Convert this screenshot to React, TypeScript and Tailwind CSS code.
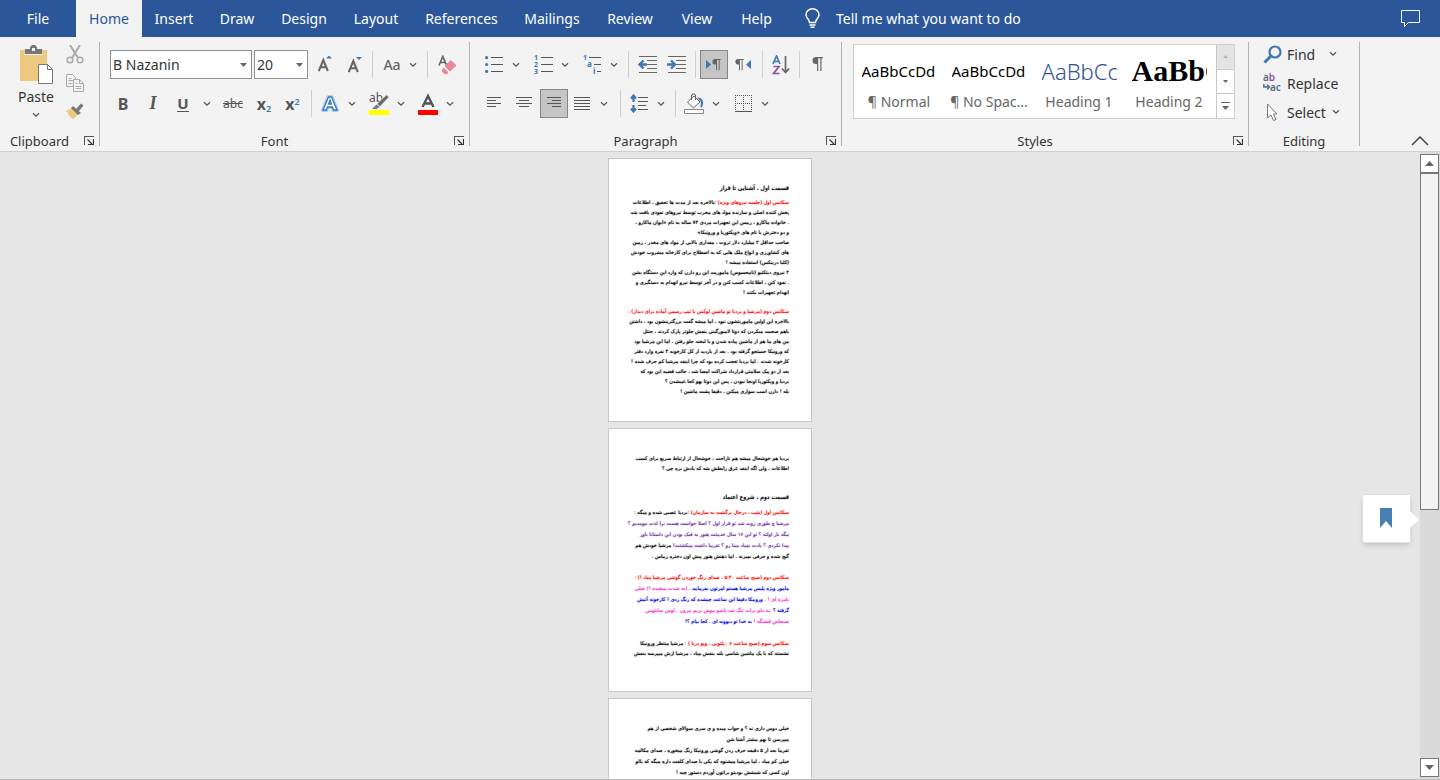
import type { ReactNode } from "react";

const tabs = [
  { name: "File", width: "w-[76px]" },
  { name: "Home", width: "w-[66px]" },
  { name: "Insert", width: "w-16" },
  { name: "Draw", width: "w-[62px]" },
  { name: "Design", width: "w-[72px]" },
  { name: "Layout", width: "w-[72px]" },
  { name: "References", width: "w-[99px]" },
  { name: "Mailings", width: "w-[82px]" },
  { name: "Review", width: "w-[74px]" },
  { name: "View", width: "w-[60px]" },
  { name: "Help", width: "w-[59px]" },
];

type Tone = "black" | "red" | "purple" | "blue" | "pink";
type Run = [Tone, string];
type Line = Run[];

const toneClass: Record<Tone, string> = {
  black: "text-black",
  red: "text-[#ff0000]",
  purple: "text-[#7030a0]",
  blue: "text-[#0000e6]",
  pink: "text-[#f032c8]",
};

const k = (text: string): Line => [["black", text]];

const sceneOne: Line[] = [
  [["red", "سکانس اول (جلسه نیروهای ویژه) "], ["black", ":بالاخره بعد از مدت ها تحقیق ، اطلاعات"]],
  k("پخش کننده اصلی و سازنده مواد های مخرب توسط نیروهای نفوذی یافت شد"),
  k(". خانواده ماکارو ، رییس این تجهیزات مردی ۷۴ ساله به نام «ایوان ماکارو ،"),
  k("و دو دخترش با نام های «ویکتوریا و ورونیکا»"),
  k("صاحب حداقل ۲ میلیارد دلار ثروت ، مقداری بالایی از مواد های مخدر ، زمین"),
  k("های کشاورزی و انواع ملک هایی که به اصطلاح برای کارخانه مشروب خودش"),
  k("(کلبا درینکس) استفاده میشه !"),
  k("۲ نیروی دیتکتیو (نامحسوس) ماموریت این رو دارن که وارد این دستگاه بشن"),
  k(". نفوذ کنن ، اطلاعات کسب کنن و در آخر توسط نیرو انهدام به دستگیری و"),
  k("انهدام تجهیزات بکنند !"),
];

const sceneTwo: Line[] = [
  [["red", "سکانس دوم (مرشیا و بردیا تو ماشین لوکس با تیپ رسمی آماده برای دیدار) :"]],
  k("بالاخره این اولین ماموریتشون نبود ، اما میشه گفت بزرگترینشون بود ، داشتن"),
  k("باهم صحبت میکردن که دوتا لامبورگینی بنفش جلوتر پارک کردند ، جنتل"),
  k("من های ما هم از ماشین پیاده شدن و با لبخند جلو رفتن ، اما این مرشیا بود"),
  k("که ورونیکا جستجو گرفته بود . بعد از بازدید از کل کارخونه ۴ نفره وارد دفتر"),
  k("کارخونه شدند . اما بردیا تعجب کرده بود که چرا اینقد مرشیا کم حرف شده !"),
  k("بعد از دو پیک سلامتی قرارداد شراکت امضا شد ، جالب قضیه این بود که"),
  k("بردیا و ویکتوریا اونجا نبودن ، پس این دوتا یهو کجا غیبشدن ؟"),
  k("بله ! دارن اسب سواری میکنن ، دقیقا پشت ماشین !"),
];

const partOneEnd: Line[] = [
  k("بردیا هم خوشحال میشه هم ناراحت ، خوشحال از ارتباط سریع برای کسب"),
  k("اطلاعات ، ولی اگه اینقد غرق رابطش شه که یادش بره چی ؟"),
];

const nightScene: Line[] = [
  [["red", "سکانس اول (شب ، درحال برگشت به سازمان) "], ["black", ":بردیا عصبی شده و میگه :"]],
  [["purple", "مرشیا چ طوری روت شد تو قرار اول ؟ اصلا حواست هست برا لذت نیومدیم ؟"]],
  [["purple", "مگه بار اولته ؟ تو این ۱۶ سال خدمتت هنوز به فیک بودن این داستانا باور"]],
  [["purple", "پیدا نکردی ؟ یادت نمیاد مینا رو ؟ تقریبا داشت میکشتت! "], ["black", "مرشیا خودش هم"]],
  k("گیج شده و حرفی نمیزنه . اما ذهنش هنوز پیش اون دختره زیباس ."),
];

const callScene: Line[] = [
  [["red", "سکانس دوم (صبح ساعت ۵:۴۰ ، صدای زنگ خوردن گوشی مرشیا میاد !) :"]],
  [["blue", "مامور ویژه پلیس مرشیا هستم امرتون بفرمایید . "], ["pink", "(به شدت میخنده !) خیلی"]],
  [["pink", "بامزه ای ! . "], ["blue", "ورونیکا دقیقا این ساعت چیشده که زنگ زدی ! کارخونه آتیش"]],
  [["blue", "گرفته ؟ "], ["pink", ".نه دلم برات تنگ شد پاشو بپوش بریم بیرون . لوس سانتوس"]],
  [["pink", "صبحاش قشنگه ! "], ["blue", "به خدا تو دیوونه ای . کجا بیام ؟!"]],
];

const morningScene: Line[] = [
  [["red", "سکانس سوم (صبح ساعت ۶ . پلتوبی . ویو دریا ) : "], ["black", "مرشیا منتظر ورونیکا"]],
  k("نشسته که با یک ماشین شاسی بلند بنفش میاد ، مرشیا ازش میپرسه بنفش"),
];

const lastScene: Line[] = [
  k("خیلی دوس داری نه ؟ و جواب میده و ی سری سوالای شخصی از هم"),
  k("میپرسن تا بهم بیشتر آشنا شن"),
  k("تقریبا بعد از ۵ دقیقه حرف زدن گوشی ورونیکا زنگ میخوره ، صدای مکالمه"),
  k("خیلی کم میاد ، اما مرشیا میشنوه که یکی با صدای کلفت داره میگه که یالو"),
  k("اون کسی که شیشش بودیتو براتون آوردم دستور چیه !"),
];

function Paragraph({ lines, leading = "leading-[11px]" }: { lines: Line[]; leading?: string }) {
  return (
    <p className={`text-[5px] ${leading}`}>
      {lines.map((line, i) => (
        <span key={i} className="block whitespace-nowrap">
          {line.map(([tone, text], j) => (
            <span key={j} className={`${toneClass[tone]} [text-shadow:0_0_1px_currentColor]`}>{text}</span>
          ))}
        </span>
      ))}
    </p>
  );
}

function Page({ children }: { children: ReactNode }) {
  return (
    <article
      dir="rtl"
      lang="fa"
      className="h-[264px] w-[204px] shrink-0 overflow-hidden border border-[#c6c6c6] bg-white px-[22px] pt-6 font-['DejaVu_Sans',sans-serif]"
    >
      {children}
    </article>
  );
}

function Chevron() {
  return (
    <svg width="8" height="6" viewBox="0 0 8 6" fill="none" stroke="#555" strokeWidth="1.3">
      <path d="M1 1.2 4 4.2 7 1.2" />
    </svg>
  );
}

function Tool({ label, width = "w-7", active = false, children }: { label: string; width?: string; active?: boolean; children: ReactNode }) {
  return (
    <button
      aria-label={label}
      className={`flex h-[29px] shrink-0 items-center justify-center ${width} ${active ? "border border-[#858585] bg-[#c5c5c5]" : ""}`}
    >
      {children}
    </button>
  );
}

function Split({ label, children }: { label: string; children: ReactNode }) {
  return (
    <div className="flex shrink-0">
      <Tool label={label}>{children}</Tool>
      <Tool label={`${label} options`} width="w-[15px]"><Chevron /></Tool>
    </div>
  );
}

function Sep() {
  return (
    <div className="flex w-[9px] shrink-0 justify-center">
      <div className="h-[27px] w-px bg-[#d0d0d0]" />
    </div>
  );
}

function Group({ title, width, launcher = true, children }: { title: string; width: string; launcher?: boolean; children: ReactNode }) {
  return (
    <section aria-label={title} className={`flex shrink-0 py-[5px] ${width}`}>
      <div className="flex min-w-0 flex-1 flex-col justify-between">
        {children}
        <div className="flex h-[10px] items-center text-[13px] leading-[10px] text-[#333]">
          <span className="flex-1 text-center">{title}</span>
          {launcher && (
            <button aria-label={`${title} settings`} className="flex w-5 items-center justify-center">
              <svg width="10" height="10" viewBox="0 0 10 10" fill="none" stroke="#555" shapeRendering="crispEdges">
                <path d="M.5 9V.5H10" />
                <path d="M3.500 3.500 8 8M9.500 3v5.500H4" shapeRendering="auto" stroke="#333" strokeWidth="1.2" />
              </svg>
            </button>
          )}
        </div>
      </div>
      <div className="w-px bg-[#b1b1b1]" />
    </section>
  );
}

function Combo({ label, value, width }: { label: string; value: string; width: string }) {
  return (
    <div className={`relative h-[29px] shrink-0 ${width}`}>
      <select aria-label={label} className="h-full w-full appearance-none border border-[#919191] bg-white pl-[2px] text-[14px] text-[#333]">
        <option>{value}</option>
      </select>
      <svg className="pointer-events-none absolute top-[13px] right-[5px]" width="7" height="4" viewBox="0 0 7 4" fill="#666"><path d="M0 0h7L3.500 4z" /></svg>
    </div>
  );
}

/* Alignment icon, each entry is a [start, end] pair. */
function LinesIcon({ rows, width }: { rows: [number, number][]; width: number }) {
  return (
    <svg width={width} height="14" viewBox={`0 0 ${width} 14`} stroke="#555" shapeRendering="crispEdges">
      {rows.map(([a, b], i) => <path key={i} d={`M${a} ${i * 3 + 0.5}H${b}`} />)}
    </svg>
  );
}

function IndentIcon({ inward }: { inward: boolean }) {
  return (
    <svg width="19" height="17" viewBox="0 0 19 17" fill="none">
      <path d="M1 .5h18M9 4.500h10M9 8.500h10M9 12.500h10M1 16.500h18" stroke="#666" shapeRendering="crispEdges" />
      <path d={inward ? "M0 8.500h7M4 4.500l4 4-4 4" : "M9 8.500H2M5.500 4.500l-4 4 4 4"} stroke="#3f76b4" strokeWidth="2.400" />
    </svg>
  );
}

function ClipboardTools() {
  return (
    <div className="flex pt-[3px]">
      <button className="flex w-[62px] flex-col items-center pl-[10px] text-[14px] leading-[18px] text-[#333]">
        <svg width="36" height="39" viewBox="0 0 36 39">
          <path d="M2 5h27v31H2z" fill="#edc87e" />
          <path d="M7 9V4h5V2l2-2h3l2 2v2h5v5z" fill="#777" />
          <path d="M14 3h3v3h-3z" fill="#f3f3f3" />
          <path d="M6 9.500h19" stroke="#f3f3f3" />
          <path d="M20.500 19.500h9l5 5v14h-14z" fill="#fff" stroke="#777" />
          <path d="M29.500 19.500v5h5" fill="none" stroke="#777" />
        </svg>
        <span className="mt-1">Paste</span>
        <span className="mt-[6px]"><Chevron /></span>
      </button>
      <div className="flex flex-col items-center gap-[9px] pl-[4px]">
        <button aria-label="Cut">
          <svg width="18" height="20" viewBox="0 0 18 20" fill="none" stroke="#aaa">
            <path d="M4 0 12 13M14 0 6 13" strokeWidth="2" />
            <circle cx="4" cy="15" r="2.800" strokeWidth="1.600" />
            <circle cx="14" cy="15" r="2.800" strokeWidth="1.600" />
          </svg>
        </button>
        <button aria-label="Copy">
          <svg width="18" height="19" viewBox="0 0 18 19" fill="#f3f3f3" stroke="#aaa">
            <path d="M.5.5h6l3 3v9h-9z" />
            <path d="M2.500 4.500h3M2.500 6.500h5M2.500 9.500h4" />
            <path d="M7.500 5.500h6l4 4v8h-10z" />
            <path d="M13.500 5.500v4h4M9.500 9.500h2M9.500 12.500h6M9.500 14.500h6" fill="none" />
          </svg>
        </button>
        <button aria-label="Format Painter">
          <svg width="18" height="17" viewBox="0 0 18 17">
            <path d="m0 9 6-3 6 6-4 5-3-1-1-2-1 0-1-3z" fill="#edc87e" />
            <path d="m7 4 8 7-3 2-7-7z" fill="#777" />
            <path d="m10 7 5-5.500 2.500 2-5 6z" fill="#777" />
          </svg>
        </button>
      </div>
    </div>
  );
}

function FontTools() {
  return (
    <div className="flex flex-col gap-[10px] pt-2">
      <div className="flex items-center pl-[10px]">
        <div className="flex gap-[2px]">
          <Combo label="Font" value="B Nazanin" width="w-[142px]" />
          <Combo label="Font size" value="20" width="w-[54px]" />
        </div>
        <Tool label="Grow font" width="w-[34px]">
          <svg width="14" height="18" viewBox="0 0 14 18" fill="none">
            <path d="M.8 15 5.300 4 9.800 15M2.500 11.300h5.600" stroke="#666" strokeWidth="2" />
            <path d="m8 2.500 3-3 3 3z" fill="#3f76b4" />
          </svg>
        </Tool>
        <Tool label="Shrink font" width="w-[26px]">
          <svg width="14" height="18" viewBox="0 0 14 18" fill="none">
            <path d="M.8 16 5.300 5 9.800 16M2.500 12.300h5.600" stroke="#666" strokeWidth="2" />
            <path d="m8 1 3 3 3-3z" fill="#3f76b4" />
          </svg>
        </Tool>
        <Sep />
        <button aria-label="Change case" className="flex h-[29px] w-[46px] shrink-0 items-center justify-center gap-2 text-[14px] font-medium text-[#666]">
          Aa <Chevron />
        </button>
        <Sep />
        <Tool label="Clear formatting" width="w-[30px]">
          <svg width="19" height="20" viewBox="0 0 19 20" fill="none">
            <path d="M1 10.500 4.800 1.500 8.500 10M2.500 7.500h4.500" stroke="#666" strokeWidth="1.700" />
            <path d="m13 5.500 5 5-6 5.500-5-5z" fill="#e8889a" stroke="#e8889a" strokeLinejoin="round" />
            <path d="m5.500 12.500 5 5-1.500 1.500-2 .5-3.500-3.500z" fill="#e8889a" />
          </svg>
        </Tool>
      </div>
      <div className="flex items-center pl-2">
        <Tool label="Bold" width="w-[30px]"><span className="text-[16px] font-bold text-[#555]">B</span></Tool>
        <Tool label="Italic" width="w-[30px]"><span className="font-['Liberation_Serif',serif] text-[18px] font-bold text-[#555] italic">I</span></Tool>
        <Tool label="Underline" width="w-[30px]"><span className="border-b border-[#555] text-[15px] leading-[15px] font-bold text-[#555]">U</span></Tool>
        <Tool label="Underline options" width="w-[18px]"><Chevron /></Tool>
        <Tool label="Strikethrough" width="w-[34px]"><span className="text-[12px] text-[#555] line-through">abc</span></Tool>
        <Tool label="Subscript"><span className="text-[16px] leading-4 font-bold text-[#555]">x<sub className="text-[9px] font-semibold text-[#3f76b4]">2</sub></span></Tool>
        <Tool label="Superscript" width="w-[29px]"><span className="text-[16px] leading-4 font-bold text-[#555]">x<sup className="text-[9px] font-semibold text-[#3f76b4]">2</sup></span></Tool>
        <Sep />
        <div className="flex gap-[6px]">
          <Split label="Text effects">
            <svg width="20" height="20" viewBox="0 0 20 20" fill="none">
              <path d="M3 16 8.500 3h3L17 16h-3.500l-1-3h-5l-1 3zM8.500 10h3L10 6z" stroke="#a9cdf3" strokeWidth="4" strokeLinejoin="round" />
              <path d="M3 16 8.500 3h3L17 16h-3.500l-1-3h-5l-1 3zM8.500 10h3L10 6z" stroke="#3a78c0" strokeWidth="1.300" fill="#fff" fillRule="evenodd" />
            </svg>
          </Split>
          <Split label="Highlight">
            <svg width="20" height="28" viewBox="0 0 20 28">
              <text x="0" y="12" fontSize="12" fill="#555" className="font-['Noto_Sans',sans-serif]">ab</text>
              <path d="m17.500 5 2.500 2-9 9.500-3-2.500z" fill="#666" stroke="#f3f3f3" strokeWidth=".5" />
              <path d="m7.500 14.500 3 2.500-3 2H3z" fill="#777" />
              <path d="M0 20h20v5H0z" fill="#ff0" />
            </svg>
          </Split>
          <Split label="Font color">
            <svg width="20" height="22" viewBox="0 0 20 22" fill="none">
              <path d="M4.500 14 10 3l5.500 11M6.500 10.500h7" stroke="#555" strokeWidth="2.400" />
              <path d="M0 17h20v5H0z" fill="#f00" />
            </svg>
          </Split>
        </div>
      </div>
    </div>
  );
}

function Pilcrow({ x, y, scale = 1 }: { x: number; y: number; scale?: number }) {
  return (
    <g transform={`translate(${x} ${y}) scale(${scale})`} fill="#666">
      <path d="M4 0h7v1.200H9.500V14H8.300V1.200H6.200V14H5V7H4A3.500 3.500 0 0 1 4 0z" />
    </g>
  );
}

function ParagraphTools() {
  return (
    <div className="flex flex-col gap-[10px] pt-2 pl-[10px]">
      <div className="flex items-center">
        <div className="flex gap-[6px] pr-[3px]">
          <Split label="Bullets">
            <svg width="18" height="17" viewBox="0 0 18 17">
              <path d="M6 1.500h12M6 8.500h12M6 15.500h12" stroke="#555" shapeRendering="crispEdges" />
              <g fill="#3f76b4"><circle cx="1.600" cy="1.600" r="1.600" /><circle cx="1.600" cy="8.500" r="1.600" /><circle cx="1.600" cy="15.400" r="1.600" /></g>
            </svg>
          </Split>
          <Split label="Numbering">
            <svg width="19" height="26" viewBox="0 0 19 26" fontSize="7" fontWeight="700" fill="#3f76b4" className="font-['Noto_Sans',sans-serif]">
              <path d="M7 5.500h12M7 12.500h12M7 19.500h12" stroke="#555" shapeRendering="crispEdges" />
              <text x="0" y="8">1</text><text x="0" y="15">2</text><text x="0" y="22">3</text>
            </svg>
          </Split>
          <Split label="Multilevel list">
            <svg width="20" height="26" viewBox="0 0 20 26" fontSize="8" fontWeight="700" fill="#3f76b4" className="font-['Noto_Sans',sans-serif]">
              <path d="M7 5.500h12M12 12.500h7M15 19.500h4" stroke="#555" shapeRendering="crispEdges" />
              <text x="1" y="8" fontSize="7">1</text><text x="5" y="15">a</text><text x="11" y="22">i</text>
            </svg>
          </Split>
        </div>
        <Sep />
        <Tool label="Decrease indent"><IndentIcon inward={false} /></Tool>
        <Tool label="Increase indent" width="w-[30px]"><IndentIcon inward /></Tool>
        <Sep />
        <Tool label="Left-to-right" active>
          <svg width="16" height="12" viewBox="0 0 16 12"><path d="m0 1 5 4.500L0 10z" fill="#3f76b4" /><Pilcrow x={6} y={0} scale={0.8} /></svg>
        </Tool>
        <Tool label="Right-to-left" width="w-[30px]">
          <svg width="16" height="12" viewBox="0 0 16 12"><path d="m16 1-5 4.500 5 4.500z" fill="#3f76b4" /><Pilcrow x={0} y={0} scale={0.8} /></svg>
        </Tool>
        <Sep />
        <Tool label="Sort">
          <svg width="18" height="20" viewBox="0 0 18 20" fill="none" strokeWidth="1.700">
            <path d="M1 9 4.500 1 8 9M2.300 6.500h4.500" stroke="#3f76b4" />
            <path d="M1.500 11.500H7L1.500 18.500h6" stroke="#8a52a8" />
            <path d="M13.500 1v16M10 13.500l3.500 4 3.500-4" stroke="#666" />
          </svg>
        </Tool>
        <Sep />
        <Tool label="Show marks"><svg width="12" height="15" viewBox="0 0 12 15"><Pilcrow x={0} y={0} /></svg></Tool>
      </div>
      <div className="flex items-center">
        <Tool label="Align left"><LinesIcon width={14} rows={[[0, 14], [0, 9], [0, 14], [0, 9]]} /></Tool>
        <Tool label="Align center" width="w-8"><LinesIcon width={16} rows={[[0, 16], [3, 13], [0, 16], [3, 13]]} /></Tool>
        <Tool label="Align right" active><LinesIcon width={14} rows={[[0, 14], [5, 14], [0, 14], [5, 14]]} /></Tool>
        <div className="pr-[5px]">
          <Split label="Justify"><LinesIcon width={16} rows={[[0, 16], [0, 16], [0, 16], [0, 16], [0, 16]]} /></Split>
        </div>
        <Sep />
        <div className="pr-[3px]">
          <Split label="Line spacing">
            <svg width="18" height="19" viewBox="0 0 18 19" fill="none">
              <path d="M8 3.500h10M8 7.500h10M8 11.500h8M8 15.500h10" stroke="#555" shapeRendering="crispEdges" />
              <path d="M3.500 2v6M3.500 11v6M1 4.500l2.500-3 2.500 3M1 14.500l2.500 3 2.500-3" stroke="#3f76b4" strokeWidth="2.200" />
            </svg>
          </Split>
        </div>
        <Sep />
        <div className="flex gap-[6px]">
          <Split label="Shading">
            <svg width="20" height="21" viewBox="0 0 20 21" fill="none">
              <path d="m10 3 6 6-6.500 6L3.500 9z" fill="#fff" stroke="#666" />
              <path d="M7.500 7V2.500Q9.500-1 11.500 2.500V7" stroke="#666" strokeWidth="1.200" />
              <path d="M13 4.500q5 0 6 4 .5 4-2 6.500-1-2 0-6z" fill="#3f76b4" />
              <path d="M.5 16.500h19v4H.5z" fill="#fff" stroke="#888" />
            </svg>
          </Split>
          <Split label="Borders">
            <svg width="17" height="18" viewBox="0 0 17 18" fill="none" stroke="#555" shapeRendering="crispEdges">
              <path d="M0 .5h17M0 8.500h17M.5 0v16M8.500 0v16M16.500 0v16" strokeDasharray="1 1" />
              <path d="M0 16.500h17" />
            </svg>
          </Split>
        </div>
      </div>
    </div>
  );
}

const styleCards = [
  { name: "¶ Normal", preview: "AaBbCcDd", look: "text-[15px] text-black" },
  { name: "¶ No Spac...", preview: "AaBbCcDd", look: "text-[15px] text-black" },
  { name: "Heading 1", preview: "AaBbCc", look: "text-[22px] font-light text-[#2f5496]" },
  { name: "Heading 2", preview: "AaBbC", look: "font-['Liberation_Serif',serif] text-[30px] font-bold text-black" },
];

function StylesTools() {
  return (
    <div className="pt-[2px] pr-[13px] pl-[11px]">
      <div className="flex h-[75px] border border-[#cfcfcf] bg-white">
        {styleCards.map((card) => (
          <button key={card.name} className="flex w-[90px] shrink-0 flex-col items-center pt-2">
            <span className={`block h-9 w-[75px] overflow-hidden text-left leading-9 whitespace-nowrap ${card.look}`}>
              {card.preview}
            </span>
            <span className="text-[14px] leading-[26px] whitespace-nowrap text-[#666]">{card.name}</span>
          </button>
        ))}
        <div className="ml-auto flex w-[18px] flex-col divide-y divide-[#c6c6c6] border-l border-[#c6c6c6]">
          <button aria-label="Previous styles" className="flex flex-1 items-center justify-center bg-[#e4e4e4]">
            <svg width="5" height="3" viewBox="0 0 5 3" fill="#b5b5b5"><path d="m0 3 2.500-3L5 3z" /></svg>
          </button>
          <button aria-label="Next styles" className="flex flex-1 items-center justify-center">
            <svg width="5" height="3" viewBox="0 0 5 3" fill="#666"><path d="m0 0 2.500 3L5 0z" /></svg>
          </button>
          <button aria-label="More styles" className="flex flex-1 items-center justify-center">
            <svg width="9" height="8" viewBox="0 0 9 8" fill="#666"><path d="M0 0h9v1H0zM1 4h7L4.500 8z" /></svg>
          </button>
        </div>
      </div>
    </div>
  );
}

function EditingTools() {
  return (
    <div className="flex flex-col gap-[5px] pl-[14px] text-[14px] text-[#333]">
      <button className="flex h-6 items-center gap-[5px]">
        <svg width="19" height="19" viewBox="0 0 19 19" fill="none" stroke="#3f76b4">
          <circle cx="12" cy="7" r="5.500" strokeWidth="2.200" /><path d="m8 11-6.500 6.500" strokeWidth="3" />
        </svg>
        <span className="w-[37px] text-left">Find</span><Chevron />
      </button>
      <button className="flex h-6 items-center gap-[5px]">
        <svg width="19" height="24" viewBox="0 0 19 24" fontSize="10" fontWeight="600" fill="#666">
          <text x="0" y="10" className="font-['Noto_Sans',sans-serif]">a<tspan fill="#8a52a8">b</tspan></text>
          <text x="7" y="20" className="font-['Noto_Sans',sans-serif]">a<tspan fill="#3f76b4">c</tspan></text>
          <path d="M.8 13v3h5M4 13.500l2.500 2.500L4 18.500" fill="none" stroke="#3f76b4" strokeWidth="1.500" />
        </svg>
        Replace
      </button>
      <button className="flex h-6 items-center gap-[5px]">
        <svg width="19" height="19" viewBox="0 0 19 19" fill="#fff" stroke="#777">
          <path d="M4.500 1v14l3.500-3 2.500 5.500 2.500-1-2.500-5.500H14z" />
        </svg>
        <span className="w-10 text-left">Select</span><Chevron />
      </button>
    </div>
  );
}

export default function App() {
  return (
    <div className="flex h-screen flex-col overflow-hidden bg-[#f3f3f3] font-['Noto_Sans','Open_Sans',sans-serif]">
      <header className="flex h-[37px] shrink-0 items-center bg-[#2b579a] pr-5 text-[14px] text-white">
        <nav className="flex h-full">
          {tabs.map((tab) => (
            <button
              key={tab.name}
              className={`h-full shrink-0 text-center ${tab.width} ${tab.name === "Home" ? "bg-[#f3f3f3] text-[#2b579a]" : ""}`}
            >
              {tab.name}
            </button>
          ))}
        </nav>
        <button className="flex h-full items-center gap-4 pb-px pl-[19px]">
          <svg width="15" height="20" viewBox="0 0 15 20" fill="none" stroke="#fff" strokeWidth="1.500">
            <path d="M4.500 14.500C4.500 11 1 10.500 1 6.800A6.500 6 0 0 1 14 6.800C14 10.500 10.500 11 10.500 14.500zM4.500 17h6M5.500 19.200h4" />
          </svg>
          Tell me what you want to do
        </button>
        <button aria-label="Comments" className="ml-auto">
          <svg width="19" height="17" viewBox="0 0 19 17" fill="none" stroke="#fff"><path d="M.5.5h18v12h-11l-4 4v-4h-3z" /></svg>
        </button>
      </header>

      <div className="flex h-[115px] shrink-0 border-b border-[#d0d0d0]">
        <Group title="Clipboard" width="w-[100px]"><ClipboardTools /></Group>
        <Group title="Font" width="w-[370px]"><FontTools /></Group>
        <Group title="Paragraph" width="w-[372px]"><ParagraphTools /></Group>
        <Group title="Styles" width="w-[407px]"><StylesTools /></Group>
        <Group title="Editing" width="w-[111px]" launcher={false}><EditingTools /></Group>
        <div className="flex flex-1 items-end justify-end pr-[11px] pb-[5px]">
          <button aria-label="Collapse ribbon">
            <svg width="18" height="10" viewBox="0 0 18 10" fill="none" stroke="#444" strokeWidth="1.500"><path d="m1 9 8-8 8 8" /></svg>
          </button>
        </div>
      </div>

      <div className="flex min-h-0 flex-1 border-b border-[#bdbdbd] bg-[#e6e6e6]">
        <main className="relative flex min-w-0 flex-1 flex-col items-center gap-[6px] overflow-hidden pt-[6px]">
          <Page>
            <h2 className="mb-1 text-[6px] leading-[10px] [text-shadow:0_0_1px_currentColor]">قسمت اول ، آشنایی تا قرار</h2>
            <Paragraph lines={sceneOne} leading="leading-[10px]" />
            <div className="h-[9px]" />
            <Paragraph lines={sceneTwo} leading="leading-[10px]" />
          </Page>
          <Page>
            <Paragraph lines={partOneEnd} leading="leading-[10px]" />
            <h2 className="mt-[19px] mb-[5px] text-[6px] leading-[10px] [text-shadow:0_0_1px_currentColor]">قسمت دوم ، شروع اعتماد</h2>
            <Paragraph lines={nightScene} />
            <div className="h-[10px]" />
            <Paragraph lines={callScene} />
            <div className="h-[11px]" />
            <Paragraph lines={morningScene} leading="leading-[10px]" />
          </Page>
          <Page>
            <Paragraph lines={lastScene} />
          </Page>
          <button
            aria-label="Resume reading"
            className="absolute top-[342px] right-[9px] flex h-[49px] w-[49px] items-center justify-center border border-[#e0e0e0] bg-white pr-[2px] pb-[2px] shadow-md"
          >
            <svg width="12" height="20" viewBox="0 0 12 20" fill="#4a7db3"><path d="M0 0h12v20l-6-7-6 7z" /></svg>
            <svg className="absolute top-4 -right-[9px]" width="9" height="17" viewBox="0 0 9 17" fill="#fff"><path d="m0 0 9 8.500L0 17z" /></svg>
          </button>
        </main>
        <div className="flex w-5 shrink-0 flex-col bg-[#dadada] pt-[2px] pr-px pb-[2px]">
          <button aria-label="Scroll up" className="flex h-[19px] items-center justify-center border border-[#777] bg-white">
            <svg width="9" height="5" viewBox="0 0 9 5" fill="#666"><path d="m0 5 4.500-5L9 5z" /></svg>
          </button>
          <div className="h-[337px] border border-[#777] bg-[#f3f3f3]" />
          <button aria-label="Scroll down" className="mt-auto flex h-[19px] items-center justify-center border border-[#777] bg-white">
            <svg width="9" height="5" viewBox="0 0 9 5" fill="#666"><path d="m0 0 4.500 5L9 0z" /></svg>
          </button>
        </div>
      </div>
    </div>
  );
}
